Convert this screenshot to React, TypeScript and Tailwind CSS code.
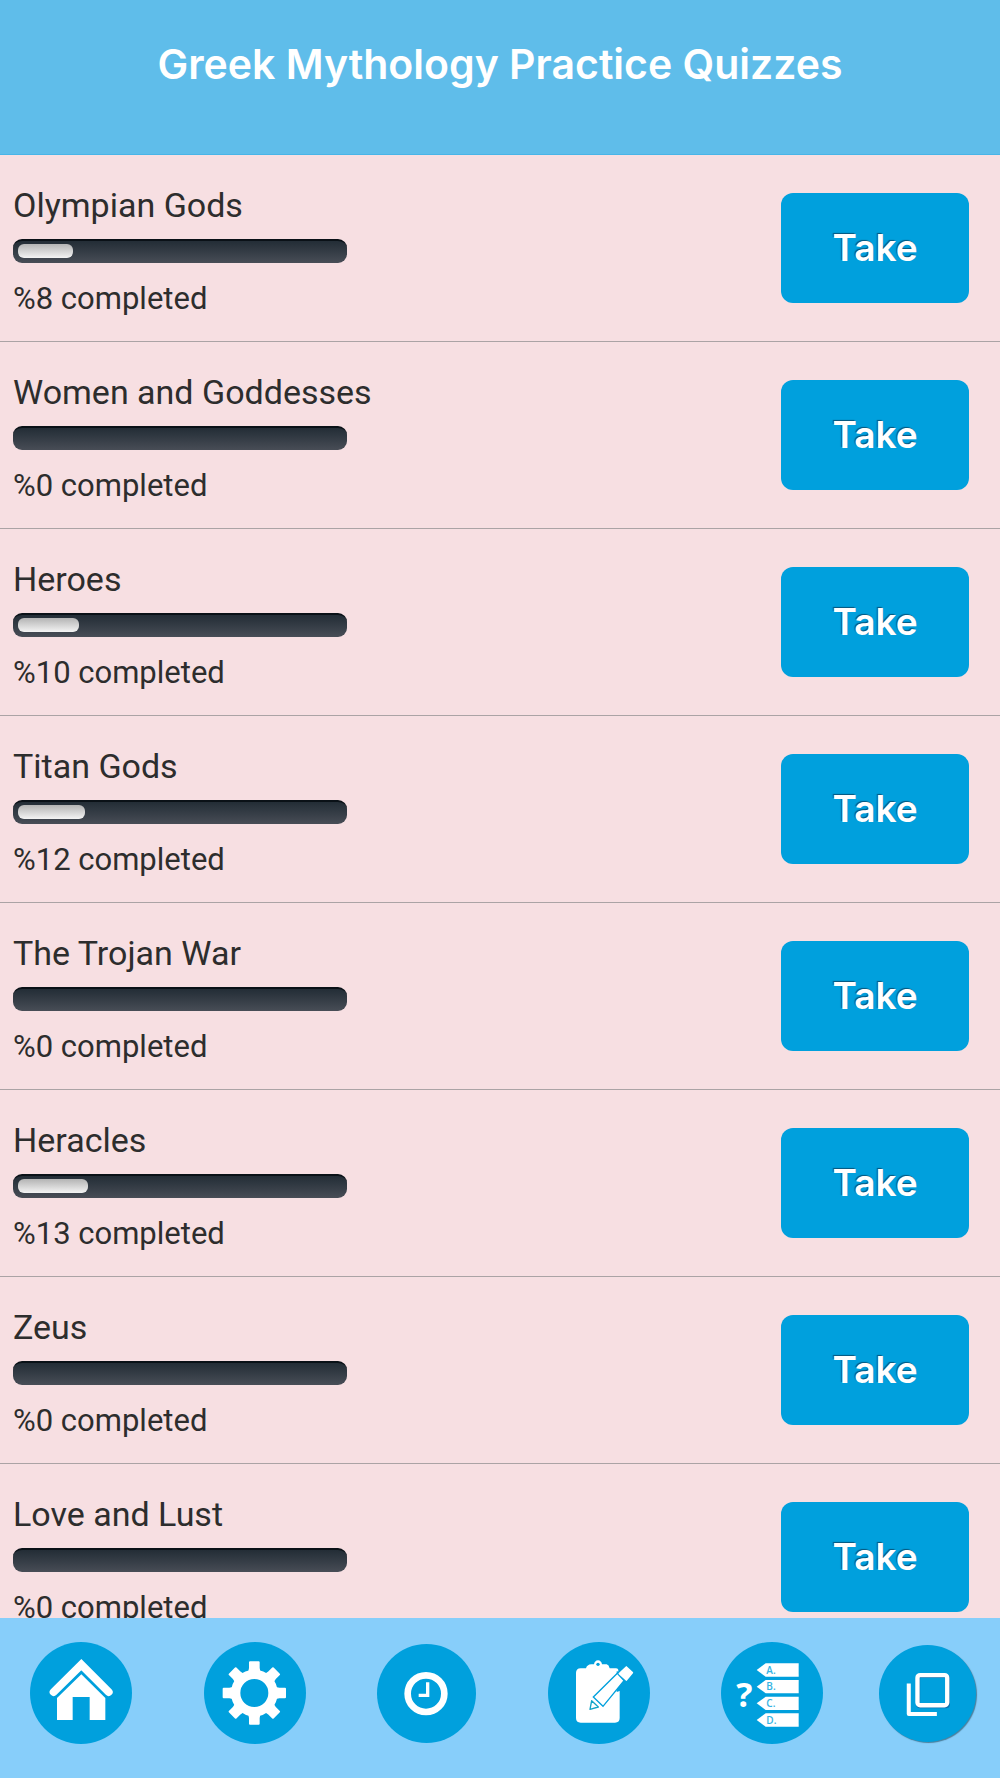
import type { ReactNode } from 'react';

const QUIZZES = [
  { title: 'Olympian Gods', completed: 8 },
  { title: 'Women and Goddesses', completed: 0 },
  { title: 'Heroes', completed: 10 },
  { title: 'Titan Gods', completed: 12 },
  { title: 'The Trojan War', completed: 0 },
  { title: 'Heracles', completed: 13 },
  { title: 'Zeus', completed: 0 },
  { title: 'Love and Lust', completed: 0 },
];

const GEAR_ANGLES = [0, 45, 90, 135, 180, 225, 270, 315];
const ANSWERS = ['A.', 'B.', 'C.', 'D.'];

function HomeIcon() {
  return (
    <svg viewBox="0 0 306 306" className="block size-full" aria-hidden="true">
      <path d="M71 150 154 68 236 150" fill="none" stroke="#fff" strokeWidth="24" strokeLinecap="round" />
      <path d="M154 97 226 168V234H179V165H128V234H81V168Z" fill="#fff" />
    </svg>
  );
}

function GearIcon() {
  return (
    <svg viewBox="0 0 306 306" className="block size-full" aria-hidden="true">
      <circle cx="151" cy="153" r="56" fill="none" stroke="#fff" strokeWidth="28" />
      {GEAR_ANGLES.map((a) => (
        <path key={a} d="M132 92 135 78V61Q135 58 138 58H164Q167 58 167 61V78L170 92Z" fill="#fff" transform={`rotate(${a} 151 153)`} />
      ))}
    </svg>
  );
}

function ClockIcon() {
  return (
    <svg viewBox="0 0 297 297" className="block size-full" aria-hidden="true">
      <circle cx="147" cy="149" r="55" fill="none" stroke="#fff" strokeWidth="20" />
      <path d="M152 115V154H125" fill="none" stroke="#fff" strokeWidth="10" />
    </svg>
  );
}

function NotesIcon() {
  return (
    <svg viewBox="0 0 306 306" className="block size-full" aria-hidden="true">
      <path
        d="M98 79H114Q117 68 130 67H138Q140 56 150 55Q160 56 162 67H176Q183 69 185 79H204Q212 80 211 87L215 144V228Q215 242 201 242H98Q84 242 84 228V93Q84 79 98 79Z"
        fill="#fff"
      />
      <circle cx="150" cy="67" r="5" fill="#00a0dd" />
      <path d="M206 88 245 92 232 125 215 147 206 150Z" fill="#00a0dd" />
      <path d="M136 165 208 94 228 116 165 193Z" fill="#fff" stroke="#00a0dd" strokeWidth="4" />
      <path d="M131 176 151 195 126 202Z" fill="#fff" stroke="#12a4c8" strokeWidth="4" strokeLinejoin="round" />
      <path d="M235 75 253 92 235 114 214 95Z" fill="#fff" stroke="#fff" strokeWidth="5" strokeLinejoin="round" />
    </svg>
  );
}

function AnswersIcon() {
  return (
    <svg viewBox="0 0 306 306" className="block size-full font-['Open_Sans',sans-serif]" aria-hidden="true">
      <text x="46" y="195" fontSize="102" fontWeight="700" fill="#fff">?</text>
      {ANSWERS.map((label, i) => (
        <g key={label} transform={`translate(0 ${i * 50})`}>
          <path d="M107 84 134 64H233V104H134Z" fill="#fff" />
          <text x="136" y="95" fontSize="30" fontWeight="600" fill="#35b3e3">{label}</text>
        </g>
      ))}
    </svg>
  );
}

function WindowsIcon() {
  return (
    <svg viewBox="0 0 290 290" className="block size-full" aria-hidden="true">
      <rect x="117" y="93" width="89" height="90" rx="6" fill="none" stroke="#0c6fae" strokeWidth="12" />
      <rect x="115" y="90" width="89" height="90" rx="8" fill="none" stroke="#fff" strokeWidth="13" />
      <path d="M89 115V206H173" fill="none" stroke="#fff" strokeWidth="12" strokeLinejoin="round" />
    </svg>
  );
}

function NavItem({ label, className, children }: { label: string; className: string; children: ReactNode }) {
  return (
    <a href="#" aria-label={label} className={`shrink-0 rounded-full bg-[#00a0dd] ${className}`}>
      {children}
    </a>
  );
}

function ProgressBar({ value, label }: { value: number; label: string }) {
  return (
    <div
      role="progressbar"
      aria-label={label}
      aria-valuenow={value}
      aria-valuemin={0}
      aria-valuemax={100}
      className="mt-3.5 h-6 w-[334px] rounded-[9px] border-t-2 border-[#0a1117] bg-linear-to-b from-[#232d36] to-[#484d56] px-[5px] pt-[3px]"
    >
      {value > 0 && (
        <div
          className="h-3.5 rounded-md bg-linear-to-b from-[#b4b4b4] to-[#f4f4f4]"
          style={{ width: `${9.4 + value * 0.94}%` }}
        />
      )}
    </div>
  );
}

export default function App() {
  return (
    <div className="flex h-screen flex-col bg-[#f7dfe2] font-[Roboto,sans-serif] text-[#2d2d2d]">
      {/* Header */}
      <header className="shrink-0 border-b border-[#48b5e8] bg-[#5fbdea] px-4 pt-10 pb-[66px]">
        <h1 className="text-center font-[Inter,sans-serif] text-[41px] leading-[48px] font-semibold text-white">
          Greek Mythology Practice Quizzes
        </h1>
      </header>

      {/* Quiz list */}
      <main className="min-h-0 flex-1 overflow-y-auto [scrollbar-width:none]">
        <ul>
          {QUIZZES.map((quiz) => (
            <li key={quiz.title} className="flex items-center justify-between border-b border-[#aba3a5] pr-[31px] pl-[13px]">
              <div className="pt-[30px] pb-6">
                <h2 className="text-[34px] leading-10">{quiz.title}</h2>
                <ProgressBar value={quiz.completed} label={quiz.title} />
                <p className="mt-[18px] text-[31px] leading-9">%{quiz.completed} completed</p>
              </div>
              <button
                type="button"
                className="h-[110px] w-[188px] rounded-xl bg-[#00a0dd] font-[Inter,sans-serif] text-[37px] font-semibold text-white [text-shadow:-1px_-1px_1px_#07547a]"
              >
                Take
              </button>
            </li>
          ))}
        </ul>
      </main>

      {/* Bottom nav */}
      <nav className="flex shrink-0 items-center bg-[#87cefa] pt-6 pr-6 pb-[34px] pl-[30px]">
        <div className="flex flex-1 items-center justify-between">
          <NavItem label="Home" className="size-[102px]"><HomeIcon /></NavItem>
          <NavItem label="Settings" className="size-[102px]"><GearIcon /></NavItem>
          <NavItem label="History" className="size-[99px]"><ClockIcon /></NavItem>
          <NavItem label="Notes" className="size-[102px]"><NotesIcon /></NavItem>
          <NavItem label="Quiz" className="size-[102px]"><AnswersIcon /></NavItem>
        </div>
        <NavItem label="More apps" className="ml-14 size-[97px] shadow-[1px_1px_1px_#4a7f9c]"><WindowsIcon /></NavItem>
      </nav>
    </div>
  );
}
